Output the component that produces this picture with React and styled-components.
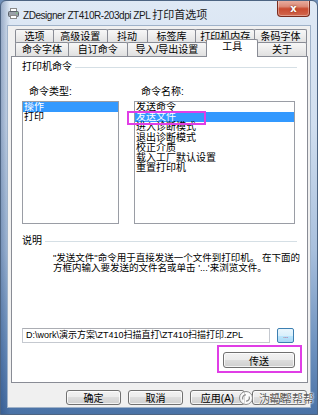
import React from 'react';
import styled, { createGlobalStyle } from 'styled-components';

const FONT = `"Liberation Sans", "Noto Sans CJK SC", sans-serif`;

const Global = createGlobalStyle`
  html, body { margin: 0; padding: 0; width: 318px; height: 415px; overflow: hidden; background: #6f8fb8; }
  #root { width: 318px; height: 415px; }
  * { box-sizing: border-box; }
`;

const Window = styled.div`
  position: relative;
  width: 318px;
  height: 415px;
  display: flex;
  flex-direction: column;
  border: 1px solid #4d6482;
  border-radius: 6px 6px 0 0;
  background:
    linear-gradient(90deg, rgba(25, 60, 115, 0.35) 0px, rgba(25, 60, 115, 0) 9px),
    linear-gradient(180deg, #dfe9f5 0%, #d0deef 30%, #a9c0dd 60%, #6a8fbd 85%, #4a72a6 100%);
  font-family: ${FONT};
  color: #000;
  overflow: hidden;
`;

const TitleBar = styled.div`
  height: 25px;
  display: flex;
  align-items: center;
  padding-left: 7px;
  flex-shrink: 0;
`;

const TitleText = styled.div`
  margin-left: 4px;
  font-size: 11px;
  white-space: nowrap;
  color: #1a1a1a;
`;

const Latin = styled.span`
  font-size: 10px;
  letter-spacing: -0.45px;
`;

const CloseButton = styled.div`
  margin-left: auto;
  margin-right: 7px;
  align-self: flex-start;
  margin-top: -1px;
  width: 33px;
  height: 17px;
  border: 1px solid #7a2c1f;
  border-top: none;
  border-radius: 0 0 4px 4px;
  background: linear-gradient(180deg, #eab1a4 0%, #dc8a78 40%, #c94a30 55%, #d2694f 100%);
  box-shadow: inset 0 0 0 1px rgba(255, 255, 255, 0.35);
  display: flex;
  align-items: center;
  justify-content: center;
  color: #fff;
  font-size: 10px;
  font-weight: bold;
  font-family: "DejaVu Sans", sans-serif;
  text-shadow: 0 0 2px #6a1a0a;
`;

const Client = styled.div`
  margin: 0 7px;
  width: 302px;
  height: 381px;
  background: #f0f0f0;
  box-shadow: 0 0 0 1px #9fb2c9;
  padding: 3px 3px 0 3px;
  display: flex;
  flex-direction: column;
  flex-shrink: 0;
`;

const TabRow = styled.div`
  display: flex;
  margin-left: 4px;
  height: 14px;
  margin-top: ${p => (p.$second ? -1 : 0)}px;
`;

const Tab = styled.div`
  position: relative;
  width: ${p => p.$w}px;
  height: ${p => (p.$active ? 18 : 14)}px;
  margin-top: ${p => (p.$active ? -3 : 0)}px;
  margin-left: -1px;
  &:first-child { margin-left: 0; }
  border: 1px solid #898c95;
  border-bottom: none;
  border-radius: 2px 2px 0 0;
  background: ${p => (p.$active ? '#ffffff' : 'linear-gradient(180deg, #f7f7f7 0%, #ececec 50%, #e0e0e0 100%)')};
  z-index: ${p => (p.$active ? 3 : 1)};
  font-size: 10px;
  line-height: 12px;
  display: flex;
  align-items: ${p => (p.$active ? 'flex-start' : 'center')};
  padding-top: ${p => (p.$active ? 1 : 0)}px;
  justify-content: center;
  white-space: nowrap;
`;

const Panel = styled.div`
  width: 297px;
  height: 327px;
  border: 1px solid #898c95;
  background: #ffffff;
  padding: 0 10px 0 10px;
  display: flex;
  flex-direction: column;
`;

const GroupHeader = styled.div`
  margin-top: ${p => p.$mt}px;
  height: 12px;
  display: flex;
  align-items: center;
  gap: 3px;
  font-size: 10px;
  line-height: 12px;
  white-space: nowrap;
`;

const Rule = styled.div`
  flex: 1;
  height: 1px;
  background: #d5dfe5;
`;

const Columns = styled.div`
  margin-top: 13px;
  display: flex;
  gap: 15px;
`;

const Column = styled.div`
  width: ${p => p.$w}px;
  display: flex;
  flex-direction: column;
`;

const SubLabel = styled.div`
  height: 12px;
  font-size: 10px;
  line-height: 12px;
  padding-left: 7px;
  white-space: nowrap;
`;

const ListWrap = styled.div`
  position: relative;
  margin-top: 3px;
`;

const ListBox = styled.div`
  height: 123px;
  border: 1px solid #9a9da5;
  background: #fff;
  overflow: hidden;
`;

const ListItem = styled.div`
  height: 10.2px;
  font-size: 10px;
  line-height: 10.2px;
  padding-left: 1px;
  white-space: nowrap;
  background: ${p => (p.$selected ? '#3399ff' : 'transparent')};
  color: ${p => (p.$selected ? '#ffffff' : '#000')};
`;

const Highlight = styled.div`
  position: absolute;
  left: ${p => p.$l}px;
  top: ${p => p.$t}px;
  width: ${p => p.$w}px;
  height: ${p => p.$h}px;
  border: 2px solid #e03ee6;
  pointer-events: none;
`;

const Description = styled.div`
  margin-top: 6px;
  padding-left: 31px;
  font-size: 9.5px;
  line-height: 9.5px;
  white-space: nowrap;
`;

const PathRow = styled.div`
  margin-top: 56px;
  display: flex;
  gap: 7px;
`;

const PathInput = styled.div`
  width: 248px;
  height: 15px;
  border: 1px solid #c5c9d0;
  border-top-color: #abadb3;
  background: #fff;
  font-size: 9px;
  line-height: 13px;
  padding-left: 3px;
  white-space: nowrap;
  overflow: hidden;
`;

const BrowseButton = styled.div`
  width: 17px;
  height: 15px;
  border: 1px solid #3c7fb1;
  border-radius: 2px;
  background: linear-gradient(180deg, #eaf6fd 0%, #d9f0fc 50%, #bee6fd 50%, #a7d9f5 100%);
  font-size: 8px;
  line-height: 13px;
  text-align: center;
  color: #b0507a;
  letter-spacing: -0.5px;
`;

const SendRow = styled.div`
  margin-top: 9px;
  display: flex;
  justify-content: flex-end;
  padding-right: 2px;
`;

const SendWrap = styled.div`
  position: relative;
`;

const Button = styled.div`
  width: ${p => p.$w}px;
  height: ${p => p.$h}px;
  border: 1px solid #707070;
  border-radius: 3px;
  background: linear-gradient(180deg, #f2f2f2 0%, #ebebeb 50%, #dddddd 50%, #cfcfcf 100%);
  box-shadow: inset 0 0 0 1px rgba(255, 255, 255, 0.75);
  display: flex;
  align-items: center;
  justify-content: center;
  font-size: 10px;
  white-space: nowrap;
`;

const ButtonRow = styled.div`
  margin-top: 7px;
  display: flex;
  justify-content: flex-end;
  gap: 7px;
`;

const Watermark = styled.div`
  position: absolute;
  left: 237px;
  top: 389px;
  display: flex;
  align-items: center;
  gap: 5px;
  font-size: 11px;
  color: #5a5a5a;
  text-shadow: 0 0 2px #fff, 0 0 2px #fff, 0 0 1px #fff;
  pointer-events: none;
  white-space: nowrap;
`;

const PrinterIcon = () => (
  <svg width="11" height="11" viewBox="0 0 11 11">
    <rect x="2.5" y="0.5" width="6" height="3" fill="#fff" stroke="#8a8a8a" />
    <rect x="0.5" y="3.5" width="10" height="5" rx="1" fill="#9aa0a8" stroke="#5c636b" />
    <rect x="2.5" y="7.5" width="6" height="3" fill="#fff" stroke="#8a8a8a" />
    <rect x="8" y="4.5" width="1.5" height="1" fill="#6cd06c" />
  </svg>
);

const WatermarkIcon = () => (
  <svg width="16" height="16" viewBox="0 0 16 16">
    <circle cx="8" cy="8" r="6.5" fill="rgba(255,255,255,0.7)" stroke="#8a8a8a" strokeWidth="1" />
    <path d="M5 9.5 A3 3 0 0 1 8 5" fill="none" stroke="#8a8a8a" strokeWidth="1.2" />
    <path d="M11 6.5 A3 3 0 0 1 8 11" fill="none" stroke="#8a8a8a" strokeWidth="1.2" />
  </svg>
);

const row1 = [
  ['选项', 39],
  ['高级设置', 55],
  ['抖动', 41],
  ['标签库', 50],
  ['打印机内存', 60],
  ['条码字体', 53],
];

const row2 = [
  ['命令字体', 54],
  ['自订命令', 60],
  ['导入/导出设置', 81],
  ['工具', 52, true],
  ['关于', 50],
];

const types = ['操作', '打印'];
const names = ['发送命令', '发送文件', '进入诊断模式', '退出诊断模式', '校正介质', '载入工厂默认设置', '重置打印机'];

export default function App() {
  return (
    <>
      <Global />
      <Window>
        <TitleBar>
          <PrinterIcon />
          <TitleText>
            <Latin>ZDesigner ZT410R-203dpi ZPL </Latin>打印首选项
          </TitleText>
          <CloseButton>x</CloseButton>
        </TitleBar>
        <Client>
          <TabRow>
            {row1.map(([t, w]) => (
              <Tab key={t} $w={w}>{t}</Tab>
            ))}
          </TabRow>
          <TabRow $second>
            {row2.map(([t, w, a]) => (
              <Tab key={t} $w={w} $active={a}>{t}</Tab>
            ))}
          </TabRow>
          <Panel>
            <GroupHeader $mt={4}>
              打印机命令
              <Rule />
            </GroupHeader>
            <Columns>
              <Column $w={97}>
                <SubLabel>命令类型:</SubLabel>
                <ListWrap>
                  <ListBox>
                    {types.map((t, i) => (
                      <ListItem key={t} $selected={i === 0}>{t}</ListItem>
                    ))}
                  </ListBox>
                </ListWrap>
              </Column>
              <Column $w={161}>
                <SubLabel>命令名称:</SubLabel>
                <ListWrap>
                  <ListBox>
                    {names.map((t, i) => (
                      <ListItem key={t} $selected={i === 1}>{t}</ListItem>
                    ))}
                  </ListBox>
                  <Highlight $l={-7} $t={10} $w={79} $h={14} />
                </ListWrap>
              </Column>
            </Columns>
            <GroupHeader $mt={11}>
              说明
              <Rule />
            </GroupHeader>
            <Description>
              "发送文件"命令用于直接发送一个文件到打印机。 在下面的
              <br />
              方框内输入要发送的文件名或单击 '...'来浏览文件。
            </Description>
            <PathRow>
              <PathInput>D:\work\演示方案\ZT410扫描直打\ZT410扫描打印.ZPL</PathInput>
              <BrowseButton>...</BrowseButton>
            </PathRow>
            <SendRow>
              <SendWrap>
                <Button $w={72} $h={16}>传送</Button>
                <Highlight $l={-6} $t={-7} $w={85} $h={28} />
              </SendWrap>
            </SendRow>
          </Panel>
          <ButtonRow>
            <Button $w={55} $h={15}>确定</Button>
            <Button $w={55} $h={15}>取消</Button>
            <Button $w={55} $h={15}>应用(A)</Button>
            <Button $w={55} $h={15}>帮助</Button>
          </ButtonRow>
        </Client>
        <Watermark>
          <WatermarkIcon />
          沩马帮帮帮
        </Watermark>
      </Window>
    </>
  );
}
